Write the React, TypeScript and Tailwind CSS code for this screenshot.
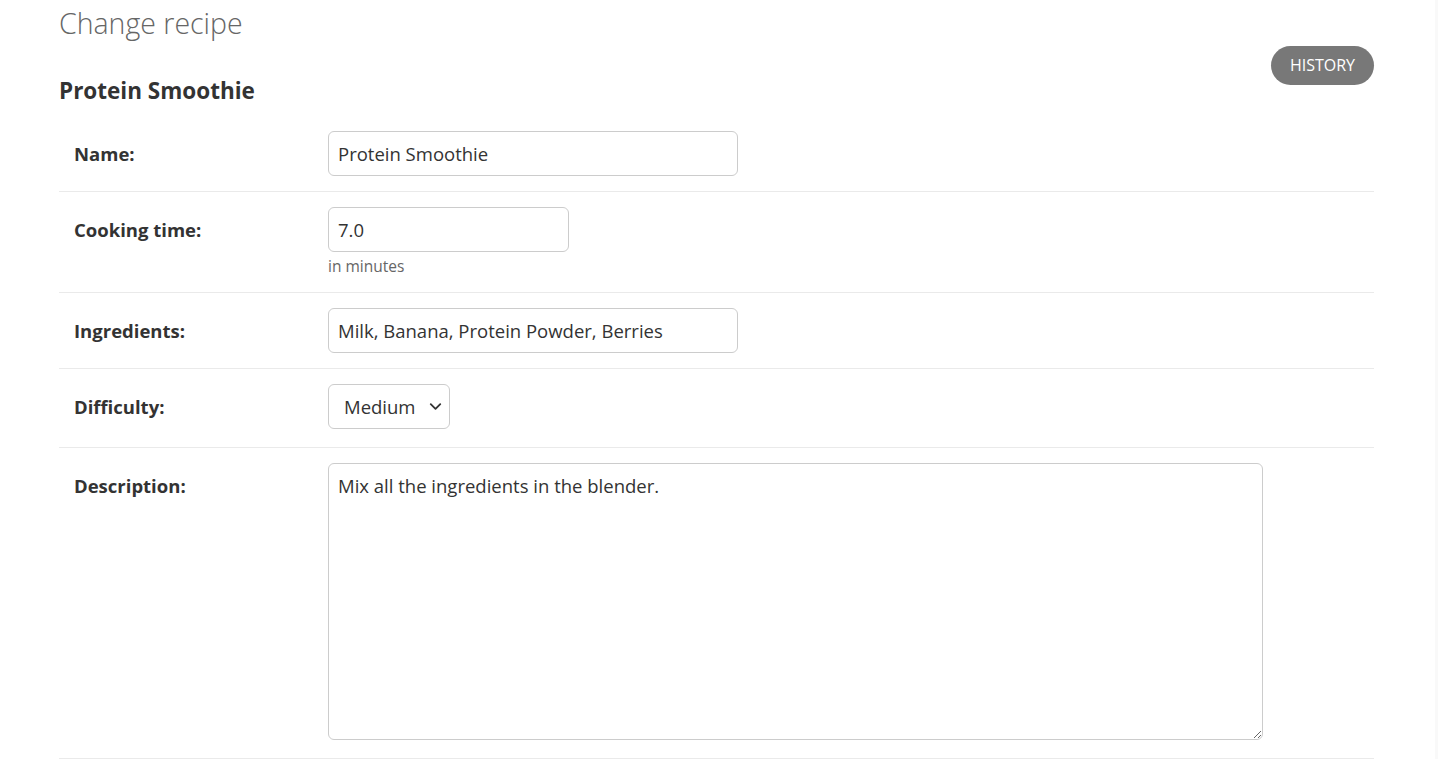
import React from "react";
import { ChevronDown } from "lucide-react";

const font = { fontFamily: '"Open Sans", "Noto Sans", sans-serif' };

function Row({
  label,
  tall,
  children,
}: {
  label: string;
  tall?: boolean;
  children: React.ReactNode;
}) {
  return (
    <div
      className={`flex border-b border-[#eaeaea] pl-[15px] pt-[15px] ${tall ? "pb-[18px]" : "pb-[15px]"}`}
    >
      <label className="w-[254px] shrink-0 pt-[8px] text-[18.5px] font-bold leading-[29px] text-[#333]">
        {label}
      </label>
      <div className="flex flex-col">{children}</div>
    </div>
  );
}

export default function App() {
  return (
    <div className="flex min-h-[759px] bg-white text-[#333]" style={font}>
      <div className="flex-1 pl-[59px] pr-[61px]">
        {/* Header */}
        <h1 className="pt-[3px] text-[28.5px] font-light leading-[40px] text-[#666]">Change recipe</h1>

        <div className="mt-[3px] flex items-start justify-between">
          <h2 className="mt-[31px] text-[22.5px] font-bold leading-[28px] text-[#333]">Protein Smoothie</h2>
          <button className="h-[39px] rounded-full bg-[#787878] px-[19px] text-[16px] leading-[39px] text-white">
            HISTORY
          </button>
        </div>

        {/* Form */}
        <div className="mt-[11px]">
          <Row label="Name:">
            <input
              defaultValue="Protein Smoothie"
              className="h-[45px] w-[410px] rounded-[6px] border border-[#ccc] px-[9px] text-[18.5px] text-[#333] outline-none"
            />
          </Row>

          <Row label="Cooking time:">
            <input
              defaultValue="7.0"
              className="h-[45px] w-[241px] rounded-[6px] border border-[#ccc] px-[9px] text-[18.5px] text-[#333] outline-none"
            />
            <span className="mt-[3px] text-[15.5px] leading-[22px] text-[#666]">in minutes</span>
          </Row>

          <Row label="Ingredients:">
            <input
              defaultValue="Milk, Banana, Protein Powder, Berries"
              className="h-[45px] w-[410px] rounded-[6px] border border-[#ccc] px-[9px] text-[18.5px] text-[#333] outline-none"
            />
          </Row>

          <Row label="Difficulty:" tall>
            <div className="relative w-[122px]">
              <select
                defaultValue="medium"
                className="h-[45px] w-[122px] appearance-none rounded-[6px] border border-[#ccc] pl-[15px] text-[18.5px] text-[#333] outline-none"
              >
                <option value="easy">Easy</option>
                <option value="medium">Medium</option>
                <option value="hard">Hard</option>
              </select>
              <ChevronDown
                className="pointer-events-none absolute right-[5px] top-[13px] h-[19px] w-[19px] text-[#333]"
                strokeWidth={2.3}
              />
            </div>
          </Row>

          <Row label="Description:" tall>
            <textarea
              defaultValue="Mix all the ingredients in the blender."
              className="h-[277px] w-[935px] resize rounded-[6px] border border-[#ccc] px-[9px] py-[9px] text-[18.5px] leading-[26px] text-[#333] outline-none"
            />
          </Row>
        </div>
      </div>
      <div className="w-[3px] shrink-0 bg-[#f9f9f9]" />
    </div>
  );
}
